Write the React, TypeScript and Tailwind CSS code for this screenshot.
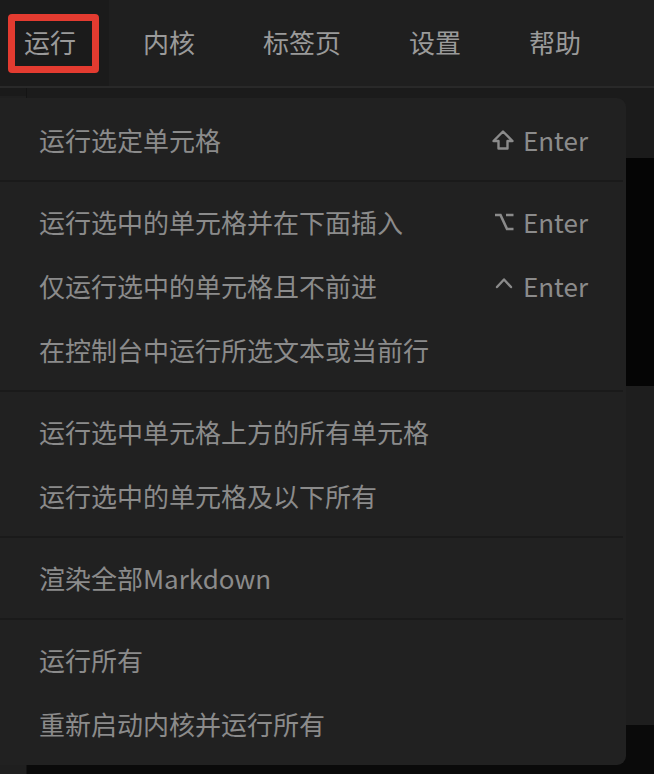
import React from "react";

const font = { fontFamily: '"Noto Sans CJK SC", "Noto Sans", sans-serif' };

function ShiftIcon() {
  return (
    <svg width="22" height="20" viewBox="0 0 22 20" fill="none" stroke="currentColor" strokeWidth="2.4" strokeLinejoin="round">
      <path d="M11 1.5 L20.5 11 H15.5 V18.5 H6.5 V11 H1.5 Z" />
    </svg>
  );
}

function OptionIcon() {
  return (
    <svg width="20" height="20" viewBox="0 0 20 20" fill="none" stroke="currentColor" strokeWidth="2.6" strokeLinecap="butt">
      <path d="M1 3 H6.5 L13 17 H19.5 M12 3 H19.5" />
    </svg>
  );
}

function CaretIcon() {
  return (
    <svg width="20" height="20" viewBox="0 0 20 20" fill="none" stroke="currentColor" strokeWidth="2.4" strokeLinecap="round" strokeLinejoin="round">
      <path d="M3 11 L10 3.5 L17 11" />
    </svg>
  );
}

type Item = { label: string; icon?: React.ReactNode };

const groups: Item[][] = [
  [{ label: "运行选定单元格", icon: <ShiftIcon /> }],
  [
    { label: "运行选中的单元格并在下面插入", icon: <OptionIcon /> },
    { label: "仅运行选中的单元格且不前进", icon: <CaretIcon /> },
    { label: "在控制台中运行所选文本或当前行" },
  ],
  [
    { label: "运行选中单元格上方的所有单元格" },
    { label: "运行选中的单元格及以下所有" },
  ],
  [{ label: "渲染全部Markdown" }],
  [{ label: "运行所有" }, { label: "重新启动内核并运行所有" }],
];

export default function App() {
  const tabs = ["内核", "标签页", "设置", "帮助"];
  return (
    <div className="relative w-[654px] h-[774px] overflow-hidden bg-[#1f1f1f]" style={font}>
      {/* top bar */}
      <div className="relative flex h-[88px] bg-[#1f1f1f] border-b-2 border-[#292929] text-[26px] text-[#9a9a9a] leading-none">
        <div className="flex items-center pl-[24px] pr-[33px] pb-[2px] bg-[#1b1b1b]">运行</div>
        {tabs.map((t) => (
          <div key={t} className="flex items-center px-[34px] pb-[2px]">{t}</div>
        ))}
        <div className="absolute left-[8px] top-[14px] w-[91px] h-[59px] border-[7px] border-[#e33b30] rounded-[4px]" />
      </div>

      {/* underlying notebook */}
      <div className="flex h-[686px]">
        <div className="w-[27px] flex flex-col border-r border-[#141414]">
          <div className="h-[8px] bg-[#1a1a1a]" />
          <div className="flex-1 bg-[#1f1f1f]" />
        </div>
        <div className="flex-1 flex flex-col">
          <div className="h-[70px] bg-[#1b1b1b]" />
          <div className="h-[228px] bg-[#050505]" />
          <div className="h-[339px] bg-[#1e1e1e]" />
          <div className="flex-1 bg-[#0a0a0a]" />
        </div>
      </div>

      {/* dropdown menu */}
      <div className="absolute left-0 top-[98px] w-[626px] bg-[#212121] rounded-r-[9px] pt-[10px] pb-[9px] text-[26px] text-[#8b8b8b] leading-none">
        {groups.map((g, gi) => (
          <div key={gi}>
            {gi > 0 && <div className="my-[8px] mr-[3px] h-[2px] bg-[#1a1a1a]" />}
            {g.map((it) => (
              <div key={it.label} className="flex items-center justify-between h-[64px] pl-[39px] pr-[38px]">
                <span>{it.label}</span>
                {it.icon && (
                  <span className="flex items-center gap-[9px]">
                    {it.icon}
                    <span>Enter</span>
                  </span>
                )}
              </div>
            ))}
          </div>
        ))}
      </div>
    </div>
  );
}
